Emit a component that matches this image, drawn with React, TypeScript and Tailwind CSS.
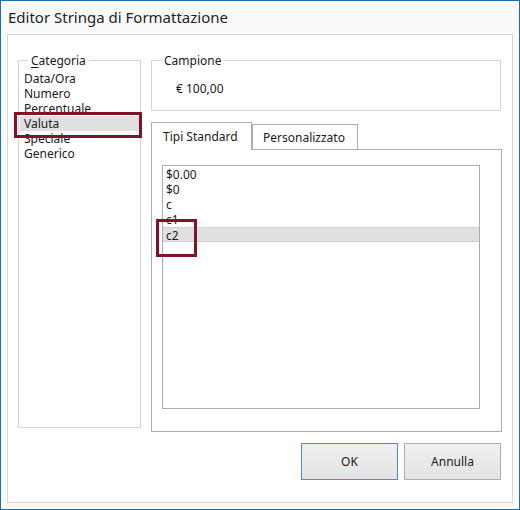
import React from "react";

const font = { fontFamily: '"Noto Sans", "Liberation Sans", sans-serif' };

export default function App() {
  const categories = ["Data/Ora", "Numero", "Percentuale", "Valuta", "Speciale", "Generico"];
  const formats = ["$0.00", "$0", "c", "c1", "c2"];
  return (
    <div
      className="relative w-[520px] h-[510px] border border-[#1b6ca8] bg-[#fafafa] flex flex-col text-[#1a1a1a]"
      style={font}
    >
      <div className="h-[33px] flex items-center pl-[7px] text-[15px] text-[#222]">
        Editor Stringa di Formattazione
      </div>
      <div className="mx-[6px] h-[469px] border border-[#d5d5d5] bg-white flex px-[10px] pt-[18px]">
        <fieldset className="w-[123px] h-[375px] border border-[#d5d5d5] pt-[3px]">
          <legend className="ml-[9px] px-[3px] text-[12px] leading-[15px]">
            <span className="underline underline-offset-2">C</span>ategoria
          </legend>
          <div className="ml-px w-[119px] flex flex-col">
            {categories.map((c) => (
              <div
                key={c}
                className={
                  "pl-[4px] text-[12px] leading-[15px] h-[15px] " +
                  (c === "Valuta" ? "bg-[#e0e0e0]" : "")
                }
              >
                {c}
              </div>
            ))}
          </div>
        </fieldset>
        <div className="ml-[10px] w-[351px] flex flex-col">
          <fieldset className="w-[350px] h-[58px] border border-[#d5d5d5] pt-[13px]">
            <legend className="ml-[9px] px-[3px] text-[12px] leading-[15px]">Campione</legend>
            <div className="pl-[24px] text-[12px] leading-[15px]">€ 100,00</div>
          </fieldset>
          <div className="mt-[11px] flex items-end">
            <div className="relative z-10 w-[101px] h-[28px] -mb-px border border-b-0 border-[#adadad] bg-white flex items-center pl-[11px] text-[12px] leading-[15px]">
              Tipi Standard
            </div>
            <div className="w-[106px] h-[25px] border border-b-0 border-[#adadad] bg-white flex items-center pl-[10px] text-[12px] leading-[15px]">
              Personalizzato
            </div>
          </div>
          <div className="w-[351px] h-[283px] border border-[#adadad] bg-white pt-[15px] pl-[10px]">
            <div className="w-[318px] h-[244px] border border-[#ababab] pt-px">
              {formats.map((f) => (
                <div
                  key={f}
                  className={
                    "pl-[3px] text-[12px] leading-[15px] h-[15px] " +
                    (f === "c2" ? "bg-[#e0e0e0] border-y border-dotted border-[#c4c4c4] leading-[13px]" : "")
                  }
                >
                  {f}
                </div>
              ))}
            </div>
          </div>
          <div className="mt-[11px] flex justify-end gap-[6px] pr-px">
            <button className="w-[97px] h-[37px] border border-[#3c8fe3] bg-linear-to-b from-[#f0f0f0] to-[#e3e3e3] text-[12px] text-[#1a1a1a]">
              OK
            </button>
            <button className="w-[97px] h-[37px] border border-[#adadad] bg-linear-to-b from-[#f0f0f0] to-[#e3e3e3] text-[12px] text-[#1a1a1a]">
              Annulla
            </button>
          </div>
        </div>
      </div>
      <div className="absolute left-[13px] top-[111px] w-[128px] h-[26px] border-[3px] border-[#7e1427]" />
      <div className="absolute left-[155px] top-[218px] w-[41px] h-[38px] border-[3px] border-[#7e1427]" />
    </div>
  );
}
